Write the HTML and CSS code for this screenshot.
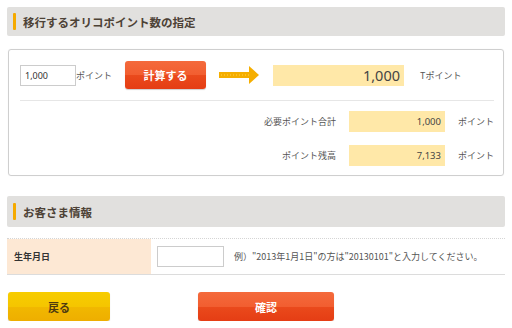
FILE: index.html
```html
<!DOCTYPE html>
<html lang="ja">
<head>
  <meta charset="UTF-8">
  <meta name="viewport" content="width=device-width, initial-scale=1.0">
  <link rel="stylesheet" href="styles.css">
  <title>ポイント移行</title>
</head>
<body>
  <div class="page">
    <h2 class="section-title">移行するオリコポイント数の指定</h2>

    <div class="calc-box">
      <div class="calc-row">
        <input class="point-input" type="text" value="1,000">
        <span class="unit unit-main">ポイント</span>
        <button class="btn btn-red btn-calc" type="button">計算する</button>
        <svg class="arrow" width="40" height="18" viewBox="0 0 40 18">
          <rect x="0" y="6" width="32" height="6" fill="#f5ae00"/>
          <line x1="2" y1="9" x2="30" y2="9" stroke="#ffd24d" stroke-width="1" stroke-dasharray="1 2"/>
          <polygon points="30,0 40,9 30,18" fill="#f5ae00"/>
        </svg>
        <div class="result big">1,000</div>
        <span class="unit t-unit">Tポイント</span>
      </div>

      <div class="sum-row">
        <span class="sum-label">必要ポイント合計</span>
        <div class="result small">1,000</div>
        <span class="unit">ポイント</span>
      </div>
      <div class="sum-row">
        <span class="sum-label">ポイント残高</span>
        <div class="result small">7,133</div>
        <span class="unit">ポイント</span>
      </div>
    </div>

    <h2 class="section-title second">お客さま情報</h2>

    <div class="info-row">
      <div class="info-label">生年月日</div>
      <div class="info-field">
        <input class="birth-input" type="text">
        <span class="hint">例）"2013年1月1日"の方は"20130101"と入力してください。</span>
      </div>
    </div>

    <div class="actions">
      <button class="btn btn-yellow btn-back" type="button">戻る</button>
      <button class="btn btn-red btn-confirm" type="button">確認</button>
    </div>
  </div>
</body>
</html>
```

FILE: styles.css
```css
body {
  margin: 0;
  background: #fff;
  font-family: "Noto Sans CJK JP", "Noto Sans", sans-serif;
  color: #555;
}
.page {
  padding: 7px 7px 0 7px;
}
.section-title {
  margin: 0;
  height: 29px;
  display: flex;
  align-items: center;
  background: #e1e0de;
  border-radius: 2px;
  font-size: 11.5px;
  font-weight: bold;
  color: #4d4236;
}
.section-title::before {
  content: "";
  width: 3px;
  height: 17px;
  margin: 0 7px 0 6px;
  background: #f5aa00;
  border-radius: 1px;
}
.section-title.second {
  margin-top: 20px;
  height: 31px;
}
.calc-box {
  margin: 13px 1px 0 1px;
  height: 125px;
  border: 1px solid #cfcfcf;
  border-radius: 3px;
  box-shadow: 0 0 1px #e5e5e5;
  padding: 0 9px 0 11px;
}
.calc-row {
  display: flex;
  align-items: center;
  height: 50px;
  border-bottom: 1px solid #e6e6e6;
}
.point-input {
  box-sizing: border-box;
  width: 56px;
  height: 21px;
  margin: 0;
  padding: 0 4px;
  border: 1px solid #ccc;
  font-family: "Noto Sans", sans-serif;
  font-size: 9px;
  color: #333;
}
.unit {
  font-size: 9px;
  color: #555;
  white-space: nowrap;
}
.unit-main {
  width: 49px;
}
.btn {
  border: none;
  border-radius: 3px;
  font-family: "Noto Sans CJK JP", sans-serif;
  font-weight: bold;
  font-size: 11px;
  padding: 0;
}
.btn-red {
  color: #fff;
  background: linear-gradient(#f46a3c 0%, #f25e30 50%, #ea4a1c 51%, #e53d14 100%);
  box-shadow: 0 1px 1px #cfcfcf;
}
.btn-yellow {
  color: #4d3a10;
  background: linear-gradient(#f7cd00 0%, #f5c500 50%, #f1b800 51%, #eeae00 100%);
  box-shadow: 0 1px 1px #cfcfcf;
}
.btn-calc {
  width: 81px;
  height: 28px;
}
.arrow {
  margin-left: 13px;
}
.result {
  background: #ffe8a8;
  text-align: right;
  color: #444;
  font-family: "Noto Sans", sans-serif;
}
.result.big {
  margin-left: 14px;
  width: 131px;
  height: 21px;
  line-height: 21px;
  font-size: 14.5px;
  padding-right: 4px;
  box-sizing: border-box;
}
.t-unit {
  margin-left: 16px;
}
.sum-row {
  display: flex;
  justify-content: flex-end;
  align-items: center;
  margin-top: 6px;
  height: 28px;
}
.sum-row + .sum-row {
  margin-top: 6px;
}
.sum-label {
  font-size: 9px;
  color: #555;
}
.result.small {
  margin: 0 13px;
  width: 96px;
  height: 21px;
  line-height: 21px;
  font-size: 9.5px;
  padding-right: 4px;
  box-sizing: border-box;
}
.sum-row .unit {
  width: 36px;
}
.info-row {
  display: flex;
  margin-top: 11px;
  height: 35px;
  border-top: 1px dotted #d5d5d5;
  border-bottom: 1px solid #dcdcdc;
}
.info-label {
  width: 137px;
  padding-left: 7px;
  display: flex;
  align-items: center;
  background-color: #fde8d4;
  background-image: radial-gradient(#f9dcc2 0.6px, transparent 0.7px);
  background-size: 4px 4px;
  font-size: 9px;
  font-weight: bold;
  color: #333;
}
.info-field {
  display: flex;
  align-items: center;
  padding-left: 6px;
}
.birth-input {
  box-sizing: border-box;
  width: 67px;
  height: 21px;
  margin: 0;
  border: 1px solid #ccc;
}
.hint {
  margin-left: 10px;
  font-size: 9px;
  color: #555;
  white-space: nowrap;
}
.actions {
  display: flex;
  margin-top: 17px;
  padding-left: 1px;
}
.btn-back {
  width: 102px;
  height: 29px;
}
.btn-confirm {
  margin-left: 88px;
  width: 136px;
  height: 29px;
}
```
